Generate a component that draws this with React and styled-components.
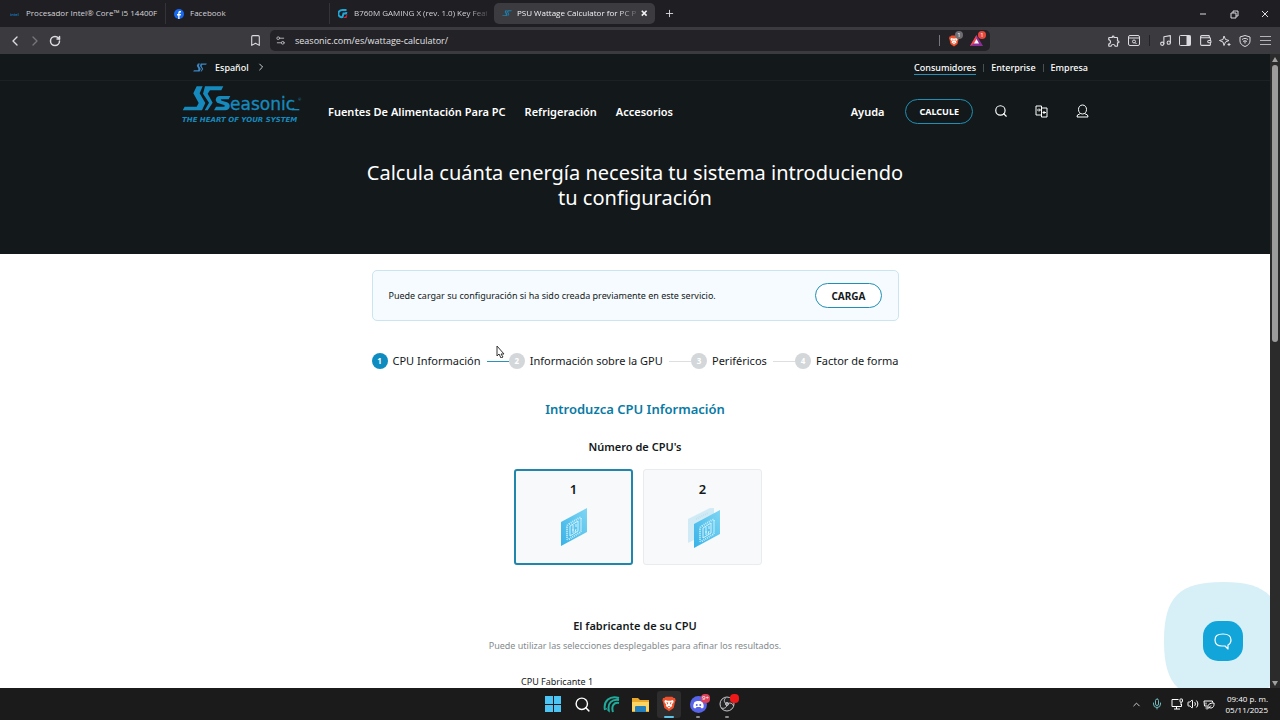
import React, { useState } from "react";
import styled, { createGlobalStyle, css } from "styled-components";
import {
  Bookmark,
  ChevronLeft,
  ChevronRight,
  ChevronUp,
  Mic,
  Music,
  RotateCw,
  Search,
  Settings2,
  Volume2,
  Wallet
} from "lucide-react";
import { MdOutlineExtension } from "react-icons/md";

const GlobalStyle = createGlobalStyle`
  * {
    box-sizing: border-box;
  }

  body {
    margin: 0;
    background: #fff;
    color: #14191b;
    font-family: "Noto Sans", sans-serif;
  }

  button {
    font-family: inherit;
    padding: 0;
    border: none;
    background: none;
    color: inherit;
  }

  a {
    color: inherit;
    text-decoration: none;
  }

  svg {
    display: block;
    flex: none;
  }
`;

const Screen = styled.div`
  display: flex;
  flex-direction: column;
  height: 100vh;
  overflow: hidden;
`;

/* browser chrome */

const TabBar = styled.div`
  flex: none;
  display: flex;
  align-items: center;
  height: 27px;
  padding-left: 2px;
  background: #1f1e23;
  color: #d4d4d8;
`;

const Tab = styled.button`
  flex: 0 1 164px;
  min-width: 0;
  height: 21px;
  display: flex;
  align-items: center;
  gap: 6px;
  padding: 0 6px 0 8px;
  font-family: "Open Sans", sans-serif;
  font-size: 8px;
  line-height: 12px;
  text-align: left;
  border-right: 1px solid ${props => (props.$divider ? "#34333a" : "transparent")};

  ${props =>
    props.$active &&
    css`
      flex-basis: 161px;
      padding-right: 5px;
      gap: 5px;
      background: #3c3b40;
      border-radius: 5px;
      color: #f2f2f4;
    `}
`;

const TabTitle = styled.span`
  flex: 1;
  min-width: 0;
  padding-bottom: 1px;
  white-space: nowrap;
  mask-image: ${props =>
    props.$fade ? "linear-gradient(to right, #000 85%, rgba(0, 0, 0, 0.2))" : "none"};
`;

const ChromeButton = styled.button`
  display: grid;
  place-items: center;
  width: 20px;
  height: 20px;
  color: ${props => (props.$dim ? "#77767c" : "#dcdce0")};
`;

const NewTab = styled(ChromeButton)`
  margin-left: 4px;
`;

const WindowButtons = styled.div`
  display: flex;
  gap: 11px;
  margin-left: auto;
  padding-right: 5px;
`;

const Toolbar = styled.div`
  flex: none;
  display: grid;
  grid-template-columns: 270px 1fr 290px;
  align-items: center;
  height: 27px;
  background: #3b3a3f;
`;

const ToolGroup = styled.div`
  display: flex;
  align-items: center;
  justify-content: ${props => (props.$end ? "flex-end" : "flex-start")};
  padding: 0 5px;
`;

const BookmarkButton = styled(ChromeButton)`
  margin-left: auto;
`;

const AddressBar = styled.div`
  display: flex;
  align-items: center;
  height: 21px;
  padding: 0 4px 0 5px;
  gap: 4px;
  border-radius: 5px;
  background: #232227;
`;

const AddressInput = styled.input`
  flex: 1;
  min-width: 0;
  padding: 0 0 0 5px;
  border: none;
  outline: none;
  background: none;
  color: #e2e2e5;
  font-family: "Open Sans", sans-serif;
  font-size: 9px;
`;

const ToolDivider = styled.span`
  width: 1px;
  height: 11px;
  margin: 0 ${props => (props.$light ? 0 : 5)}px;
  background: ${props => (props.$light ? "#77767c" : "#232227")};
`;

const Badge = styled.span`
  position: absolute;
  top: 0;
  right: 0;
  min-width: 8px;
  height: 8px;
  border-radius: 4px;
  background: ${props => props.$color};
  color: #fff;
  font-size: 6px;
  line-height: 8px;
  text-align: center;
`;

const Badged = styled.button`
  position: relative;
  display: grid;
  place-items: center;
  width: 19px;
  height: 19px;
`;

/* page */

const Viewport = styled.div`
  flex: 1;
  min-height: 0;
  display: flex;
`;

const Page = styled.main`
  position: relative;
  flex: 1;
  min-width: 0;
  overflow: hidden;
  background: #fff;
`;

const Scrollbar = styled.div`
  flex: none;
  width: 10px;
  display: flex;
  flex-direction: column;
  align-items: center;
  justify-content: space-between;
  padding: 3px 0 2px;
  background: #2b2b2c;
  color: #a0a0a0;
`;

const Thumb = styled.div`
  width: 6px;
  flex: 0 0 44%;
  margin: 3px 0 auto;
  border-radius: 3px;
  background: #9c9c9c;
`;

const Hero = styled.header`
  height: 200px;
  background: #13181a;
  color: #fff;
`;

const TopBar = styled.div`
  height: 27px;
  border-bottom: 1px solid #1c2224;
`;

const Container = styled.div`
  display: flex;
  align-items: center;
  height: 100%;
  max-width: 906px;
  margin: 0 auto;
`;

const Language = styled.button`
  display: flex;
  align-items: center;
  gap: 8px;
  padding-left: 11px;
  font-size: 9px;
  font-weight: 500;
`;

const Segments = styled.nav`
  display: flex;
  align-items: center;
  gap: 7px;
  margin-left: auto;
  padding-top: 2px;
  font-size: 9px;
  font-weight: 500;
  line-height: 12px;
`;

const Segment = styled.a`
  border-bottom: 1px solid ${props => (props.$active ? "#2b8fb3" : "transparent")};
`;

const SegmentDivider = styled.span`
  width: 1px;
  height: 8px;
  background: #4a5052;
`;

const NavRow = styled.div`
  height: 60px;
`;

const LogoLink = styled.a`
  align-self: flex-start;
  padding-top: 4px;
`;

const MainNav = styled.nav`
  display: flex;
  gap: 19px;
  margin-left: 26px;
  font-size: 11px;
  font-weight: 600;
`;

const Actions = styled.div`
  display: flex;
  align-items: center;
  margin-left: auto;
  font-size: 11px;
  font-weight: 600;
`;

const IconButton = styled.button`
  display: grid;
  place-items: center;
  width: 12px;
  height: 24px;
  margin-left: ${props => props.$gap || 29}px;
`;

const PillButton = styled.button`
  height: 25px;
  padding: 0 15px;
  border: 1px solid #1f8fb5;
  border-radius: 13px;
  background: #fff;
  font-size: 10px;
  font-weight: 700;
`;

const CalcButton = styled(PillButton)`
  margin-left: 21px;
  padding: 0 13px;
  background: transparent;
  font-size: 9px;
`;

const HeroTitle = styled.h1`
  max-width: 560px;
  margin: 19px auto 0;
  font-size: 20px;
  font-weight: 400;
  line-height: 25px;
  text-align: center;
`;

const Form = styled.form`
  max-width: 527px;
  margin: 0 auto;
  padding-top: 16px;
`;

const Banner = styled.section`
  display: flex;
  align-items: center;
  justify-content: space-between;
  height: 51px;
  padding: 0 16px;
  border: 1px solid #c9e6ef;
  border-radius: 5px;
  background: #f5fbfe;
  font-size: 9px;
`;

const Steps = styled.ol`
  display: flex;
  align-items: center;
  gap: 6px;
  margin: 31px 0 0;
  padding: 0;
  list-style: none;
`;

const Step = styled.li`
  flex: none;
  display: flex;
  align-items: center;
  gap: 5px;
  font-size: 11px;
  line-height: 18px;
`;

const StepNumber = styled.span`
  width: 16px;
  height: 16px;
  border-radius: 50%;
  background: ${props => (props.$active ? "#0e8cc0" : "#d3d7da")};
  color: #fff;
  font-size: 8px;
  font-weight: 700;
  line-height: 16px;
  text-align: center;
`;

const StepLine = styled.li`
  flex: 1;
  height: 1px;
  margin-right: -6px;
  background: ${props => (props.$active ? "#2b93b8" : "#dcdfe1")};
`;

const SectionTitle = styled.h2`
  margin: 29px 0 0;
  color: #087aa5;
  font-size: 13px;
  font-weight: 600;
  line-height: 20px;
  text-align: center;
`;

const CpuCount = styled.fieldset`
  margin: 20px 0 0;
  padding: 0;
  border: none;
`;

const GroupTitle = styled.legend`
  width: 100%;
  padding: 0;
  font-size: 11px;
  font-weight: 600;
  line-height: 16px;
  text-align: center;
`;

const Tiles = styled.div`
  display: flex;
  justify-content: center;
  gap: 10px;
  padding: 14px 0 0 6px;
`;

const Tile = styled.label`
  width: 119px;
  height: 96px;
  display: flex;
  flex-direction: column;
  align-items: center;
  gap: 9px;
  padding-top: ${props => (props.$checked ? 8 : 9)}px;
  border: ${props => (props.$checked ? "2px solid #2186ab" : "1px solid #e9ecee")};
  border-radius: 3px;
  background: #f7f9fb;
  font-size: 13px;
  font-weight: 600;
  line-height: 20px;
`;

const HiddenRadio = styled.input`
  appearance: none;
  position: absolute;
  margin: 0;
  opacity: 0;
`;

const MakerTitle = styled.h3`
  margin: 53px 0 0;
  font-size: 11px;
  font-weight: 600;
  line-height: 16px;
  text-align: center;
`;

const Hint = styled.p`
  margin: 5px 0 0;
  color: #858b8e;
  font-size: 9px;
  line-height: 14px;
  text-align: center;
`;

const Field = styled.div`
  display: flex;
  flex-direction: column;
  gap: 6px;
  width: 228px;
  margin: 22px auto 0;
  font-size: 9px;
  line-height: 14px;
`;

const MakerSelect = styled.select`
  height: 30px;
  border: 1px solid #d3d7da;
  border-radius: 3px;
  background: #fff;
`;

const Chat = styled.div`
  position: absolute;
  right: -12px;
  bottom: -12px;
  display: grid;
  place-items: center;

  > * {
    grid-area: 1 / 1;
  }
`;

const ChatButton = styled.button`
  display: grid;
  place-items: center;
  width: 40px;
  height: 40px;
  border-radius: 15px;
  background: #12a5da;
  color: #fff;
`;

const Pointer = styled.svg`
  position: absolute;
  left: 496px;
  top: 291px;
`;

/* taskbar */

const Taskbar = styled.footer`
  flex: none;
  display: grid;
  grid-template-columns: 1fr auto 1fr;
  align-items: center;
  height: 32px;
  background: #1b1b1c;
  color: #fff;
`;

const Apps = styled.div`
  grid-column: 2;
  display: flex;
  gap: 5px;
`;

const AppButton = styled.button`
  position: relative;
  display: grid;
  place-items: center;
  width: 24px;
  height: 27px;
  border-radius: 3px;
  background: ${props => (props.$active ? "#2d2d2e" : "none")};

  &::after {
    content: "";
    position: absolute;
    bottom: 0;
    width: ${props => (props.$active ? 10 : 4)}px;
    height: 2px;
    border-radius: 1px;
    background: ${props =>
      props.$active ? "#5fc3e8" : props.$running ? "#8c8c8e" : "transparent"};
  }

  ${Badge} {
    top: 3px;
    min-width: 9px;
    height: 9px;
  }
`;

const Tray = styled.div`
  display: flex;
  align-items: center;
  justify-content: flex-end;
  padding-right: 12px;
  gap: 4px;
`;

const Clock = styled.time`
  margin-left: 7px;
  font-family: "Open Sans", sans-serif;
  font-size: 8px;
  line-height: 11px;
  text-align: right;
`;

/* drawings */

const SeasonicMark = ({ width = 14, color = "#3d86c6" }) => (
  <svg width={width} height={(width * 9) / 14} viewBox="36 108 126 76" fill={color}>
    <path d="M80 110h18l-9 21 17 29-10 22H38l6-11h36l6-11-16-29z" />
    <path d="M105 110h55l-6 12h-34l-7 10 15 27-15 23h-9l13-23-18-27z" />
  </svg>
);

const Logo = () => (
  <svg width="120" height="39" viewBox="36 106 360 117" fill="#1689bd">
    <path d="M80 110h18l-9 21 17 29-10 22H38l6-11h36l6-11-16-29z" />
    <path d="M105 110h55l-6 12h-34l-7 10 15 27-15 23h-9l13-23-18-27z" />
    <path d="M181 139h-32c-14 0-16 18-3 22l16 5c4 1 3 5-1 5h-23l-6 11h34c15 0 18-19 5-24l-16-5c-4-2-3-4 1-4h20z" />
    <path d="M366 178h22v4h-22z" />
    <text x="180" y="181" fontFamily="DejaVu Sans" fontSize="51" stroke="#1689bd" strokeWidth="1">
      easonic
    </text>
    <text x="384" y="154" fontFamily="Lato" fontSize="12">
      ®
    </text>
    <text
      x="36"
      y="216"
      fontFamily="DejaVu Sans"
      fontSize="21"
      fontWeight="700"
      fontStyle="italic"
    >
      THE HEART OF YOUR SYSTEM
    </text>
  </svg>
);

const ChipFace = () => (
  <g>
    <path d="M0 14L26 0v24L0 38z" fill="url(#chip)" />
    <path
      d="M8 16l10-6q2-1 2 1v11q0 2-2 3l-10 6q-2 1-2-1V19q0-2 2-3z"
      fill="none"
      stroke="#c9effc"
      strokeWidth="2"
      strokeDasharray="1 1"
    />
    <path
      d="M9 18l8-5v10l-8 5zM12 17v8M15 16v3M11 22h2M15 21l-1 3"
      fill="none"
      stroke="#d6f4fd"
      strokeWidth="1"
    />
  </g>
);

const CpuIcon = ({ count }) => (
  <svg width="34" height="42" viewBox="0 0 34 42">
    <defs>
      <linearGradient id="chip" x1="1" y1="0" x2="0" y2="1">
        <stop offset="0" stopColor="#7fd6f3" />
        <stop offset="1" stopColor="#38b2e8" />
      </linearGradient>
    </defs>
    {count === 2 && (
      <g opacity="0.25">
        <path d="M2 11L28 -2v24L2 35z" fill="#62c5ea" />
        <path d="M10 11l12-6" stroke="#2a97c4" strokeWidth="2" strokeDasharray="1 1" />
      </g>
    )}
    <g transform={count === 2 ? "translate(8 2)" : "translate(4 0)"}>
      <ChipFace />
    </g>
  </svg>
);

const FacebookIcon = () => (
  <svg width="10" height="10" viewBox="0 0 20 20">
    <circle cx="10" cy="10" r="10" fill="#1769f0" />
    <path d="M8.500 20v-7H6v-3h2.500V8c0-3 1.500-4 3.500-4h2v3h-1.500c-1 0-1.500.5-1.500 1.500V10H14l-.5 3H11v7z" fill="#fff" />
  </svg>
);

const GigabyteIcon = () => (
  <svg width="10" height="10" viewBox="0 0 20 20">
    <path d="M17 2H9C3 2 0 6 1 11c1 4 4 6 8 5l2-7h5l1-3" fill="none" stroke="#1fa6d6" strokeWidth="4" />
    <path d="M19 10l-2 8h-7l5-3z" fill="#e0203a" />
  </svg>
);

const IntelIcon = () => (
  <svg width="10" height="10" viewBox="0 0 20 20">
    <text x="0" y="13" fontFamily="Lato" fontSize="9" fontWeight="700" fill="#1477b8">
      intel
    </text>
  </svg>
);

const BraveIcon = ({ size = 12 }) => (
  <svg width={size} height={size} viewBox="0 0 24 24">
    <path d="M7 1h10l2 2 2 0 1 4-1 2-2 9-7 5-7-5L3 9 2 7l1-4h2z" fill="#f0512b" />
    <path d="M6 6l4 1h4l4-1 1 3-3 4 1 2-3 2-2 2-2-2-3-2 1-2-3-4z" fill="#fff" />
    <path d="M8 9l3 1-1 3zM16 9l-3 1 1 3zM10 15h4l-2 2z" fill="#f0512b" />
  </svg>
);

const RewardsIcon = () => (
  <svg width="13" height="11" viewBox="0 0 26 22">
    <path d="M13 0l13 22H0z" fill="#8b2f97" />
    <path d="M13 0L0 22l13-8z" fill="#f0484b" />
    <path d="M13 8l5 9H8z" fill="#fff" />
  </svg>
);

const TabSearchIcon = () => (
  <svg width="12" height="11" viewBox="0 0 24 22" fill="none" stroke="currentColor" strokeWidth="2">
    <rect x="1" y="1" width="22" height="20" rx="3" />
    <path d="M2 6h20" />
    <circle cx="12" cy="13" r="3" />
    <path d="M14 15l3 3" />
  </svg>
);

const SidebarIcon = () => (
  <svg width="12" height="11" viewBox="0 0 24 22">
    <rect x="1" y="1" width="22" height="20" rx="2" fill="none" stroke="currentColor" strokeWidth="2" />
    <path d="M15 1h8v20h-8z" fill="currentColor" />
  </svg>
);

const LeoIcon = () => (
  <svg width="12" height="12" viewBox="0 0 24 24" fill="none" stroke="currentColor" strokeWidth="2">
    <path d="M10 2l3 7 7 2-7 3-3 7-2-7-7-3 7-2z" strokeLinejoin="round" />
    <path d="M20 16v6M17 19h6" />
  </svg>
);

const VpnIcon = () => (
  <svg width="12" height="12" viewBox="0 0 24 24" fill="none" stroke="currentColor" strokeWidth="2">
    <path d="M12 1l10 3v8c0 5-4 9-10 11C6 21 2 17 2 12V4z" />
    <path d="M6 9c4-3 8-3 12 0M8 13c3-2 5-2 8 0M12 12v5" />
  </svg>
);

const MenuIcon = () => (
  <svg width="12" height="12" viewBox="0 0 12 12" fill="#b4b3b8">
    <path d="M1 1h11v1H1zM1 5h11v1H1zM1 9h11v1H1z" />
  </svg>
);

const StrokeIcon = ({ d, size = 10, width = 1 }) => (
  <svg width={size} height={size} viewBox="0 0 10 10" fill="none" stroke="currentColor" strokeWidth={width}>
    <path d={d} />
  </svg>
);

const CompareIcon = () => (
  <svg width="13" height="13" viewBox="0 0 26 26" fill="none" stroke="currentColor" strokeWidth="2">
    <path d="M13 20H2V2h11v22h11V6H13" />
    <path d="M4 10h6M8 7l3 3-3 3M22 15h-6M19 12l-3 3 3 3" />
  </svg>
);

const UserIcon = () => (
  <svg width="13" height="14" viewBox="0 0 26 28" fill="none" stroke="currentColor" strokeWidth="2">
    <path d="M13 2c5 0 8 4 8 9s-3 9-8 9-8-4-8-9 3-9 8-9z" />
    <path d="M9 19l-6 3-1 4h22l-1-4-6-3" />
  </svg>
);

const ChatHalo = () => (
  <svg width="118" height="118" viewBox="0 0 118 118" fill="#d7eff6">
    <path d="M59 0C103 0 118 15 118 59S103 118 59 118 0 103 0 59 15 0 59 0z" />
  </svg>
);

const ChatIcon = () => (
  <svg width="18" height="18" viewBox="0 0 18 18" fill="none" stroke="currentColor" strokeWidth="1.200">
    <path
      d="M14 17l-3-3H8c-5 0-7-2-7-6s2-6 8-6 8 2 8 6c0 2-1 4-3 5z"
      strokeLinejoin="round"
    />
  </svg>
);

const WindowsIcon = () => (
  <svg width="16" height="16" viewBox="0 0 16 16" fill="#4cc5f5">
    <path d="M0 0h8v8H0zM9 0h7v8H9zM0 9h8v7H0zM9 9h7v7H9z" />
  </svg>
);

const SwirlIcon = () => (
  <svg width="17" height="17" viewBox="0 0 17 17" fill="none" stroke="#1fab9b" strokeWidth="2">
    <path d="M16 2C7-1 0 5 2 14M16 4C9 3 4 7 6 15M16 7c-5-1-8 3-6 9" />
    <path d="M3 12c1 2 2 3 4 4" strokeWidth="1" />
  </svg>
);

const FolderIcon = () => (
  <svg width="17" height="15" viewBox="0 0 17 15">
    <path d="M0 1h6l2 2h9v12H0z" fill="#e8a92c" />
    <path d="M0 5h17v9H0z" fill="#fcd462" />
    <path d="M3 10q0-1 1-1h9q1 0 1 1v5H3z" fill="#2480bd" />
  </svg>
);

const DiscordIcon = () => (
  <svg width="17" height="17" viewBox="0 0 34 34">
    <circle cx="17" cy="17" r="17" fill="#5764e8" />
    <path d="M9 12c3-3 13-3 16 0 2 4 3 7 2 11-2 2-4 2-5 1l-1-2h-8l-1 2c-1 1-3 1-5-1-1-4 0-7 2-11z" fill="#fff" />
    <circle cx="13.500" cy="18" r="2" fill="#5764e8" />
    <circle cx="20.500" cy="18" r="2" fill="#5764e8" />
  </svg>
);

const ObsIcon = () => (
  <svg width="16" height="16" viewBox="0 0 32 32" fill="none" stroke="#c9c9cb" strokeWidth="2">
    <circle cx="16" cy="16" r="14" fill="#242426" />
    <path d="M16 16c-6-2-7-8-3-12M16 16c6-4 12-1 13 4M16 16c0 7-5 10-11 8" />
    <circle cx="16" cy="16" r="3" />
  </svg>
);

const NetworkIcon = () => (
  <svg width="12" height="12" viewBox="0 0 24 24" fill="none" stroke="currentColor" strokeWidth="2">
    <path d="M15 3H2v14h19v-5M6 22h12M11 17v5" />
    <rect x="18" y="2" width="5" height="6" rx="1" />
    <path d="M20 8v6" />
  </svg>
);

const LeafIcon = () => (
  <svg width="12" height="11" viewBox="0 0 24 22" fill="none" stroke="currentColor" strokeWidth="2">
    <path d="M9 14H3L2 4h17v3M5 18h4" />
    <path d="M10 18c-1-7 3-10 12-10 1 8-4 12-10 9M8 21l8-8M6 7v4" />
  </svg>
);

const tabs = [
  { title: "Procesador Intel® Core™ i5 14400F", icon: <IntelIcon />, divider: true },
  { title: "Facebook", icon: <FacebookIcon />, divider: true },
  { title: "B760M GAMING X (rev. 1.0) Key Feat", icon: <GigabyteIcon />, fade: true },
  {
    title: "PSU Wattage Calculator for PC P",
    icon: <SeasonicMark width={10} color="#1b7fae" />,
    active: true,
    fade: true
  }
];

const steps = ["CPU Información", "Información sobre la GPU", "Periféricos", "Factor de forma"];

const Browser = () => (
  <>
    <TabBar>
      {tabs.map(tab => (
        <Tab key={tab.title} $active={tab.active} $divider={tab.divider}>
          {tab.icon}
          <TabTitle $fade={tab.fade}>{tab.title}</TabTitle>
          {tab.active && <StrokeIcon d="M1 1l6 6M7 1l-6 6" size={8} width={2} />}
        </Tab>
      ))}
      <NewTab aria-label="Nueva pestaña">
        <StrokeIcon d="M5 1v8M1 5h8" size={9} />
      </NewTab>
      <WindowButtons>
        <ChromeButton aria-label="Minimizar">
          <StrokeIcon d="M2 5h6" />
        </ChromeButton>
        <ChromeButton aria-label="Restaurar">
          <StrokeIcon d="M2 4h5v5H2zM4 4V2h5v5H7" />
        </ChromeButton>
        <ChromeButton aria-label="Cerrar">
          <StrokeIcon d="M2 2l6 6M8 2l-6 6" />
        </ChromeButton>
      </WindowButtons>
    </TabBar>
    <Toolbar>
      <ToolGroup>
        <ChromeButton aria-label="Atrás">
          <ChevronLeft size={16} />
        </ChromeButton>
        <ChromeButton aria-label="Adelante" $dim>
          <ChevronRight size={16} />
        </ChromeButton>
        <ChromeButton aria-label="Recargar">
          <RotateCw size={12} strokeWidth={3} />
        </ChromeButton>
        <BookmarkButton aria-label="Marcador">
          <Bookmark size={13} />
        </BookmarkButton>
      </ToolGroup>
      <AddressBar>
        <Settings2 size={11} color="#b9b9bd" />
        <AddressInput aria-label="Dirección" defaultValue="seasonic.com/es/wattage-calculator/" />
        <ToolDivider $light />
        <Badged aria-label="Brave Shields">
          <BraveIcon size={12} />
          <Badge $color="#6c6c72">1</Badge>
        </Badged>
        <Badged aria-label="Brave Rewards">
          <RewardsIcon />
          <Badge $color="#e8453c">1</Badge>
        </Badged>
      </AddressBar>
      <ToolGroup $end>
        <ChromeButton aria-label="Extensiones">
          <MdOutlineExtension size={14} />
        </ChromeButton>
        <ChromeButton aria-label="Buscar pestañas">
          <TabSearchIcon />
        </ChromeButton>
        <ToolDivider />
        <ChromeButton aria-label="Multimedia">
          <Music size={13} />
        </ChromeButton>
        <ChromeButton aria-label="Panel lateral">
          <SidebarIcon />
        </ChromeButton>
        <ChromeButton aria-label="Billetera">
          <Wallet size={13} />
        </ChromeButton>
        <ChromeButton aria-label="Leo">
          <LeoIcon />
        </ChromeButton>
        <ChromeButton aria-label="VPN">
          <VpnIcon />
        </ChromeButton>
        <ChromeButton aria-label="Menú">
          <MenuIcon />
        </ChromeButton>
      </ToolGroup>
    </Toolbar>
  </>
);

const SiteHeader = () => (
  <Hero>
    <TopBar>
      <Container>
        <Language>
          <SeasonicMark />
          Español
          <StrokeIcon d="M3 1l4 4-4 4" size={8} />
        </Language>
        <Segments>
          <Segment href="#consumidores" $active>
            Consumidores
          </Segment>
          <SegmentDivider />
          <Segment href="#enterprise">Enterprise</Segment>
          <SegmentDivider />
          <Segment href="#empresa">Empresa</Segment>
        </Segments>
      </Container>
    </TopBar>
    <NavRow>
      <Container>
        <LogoLink href="#inicio" aria-label="Seasonic">
          <Logo />
        </LogoLink>
        <MainNav>
          <a href="#fuentes">Fuentes De Alimentación Para PC</a>
          <a href="#refrigeracion">Refrigeración</a>
          <a href="#accesorios">Accesorios</a>
        </MainNav>
        <Actions>
          <a href="#ayuda">Ayuda</a>
          <CalcButton>CALCULE</CalcButton>
          <IconButton aria-label="Buscar" $gap={21}>
            <Search size={14} />
          </IconButton>
          <IconButton aria-label="Comparar">
            <CompareIcon />
          </IconButton>
          <IconButton aria-label="Cuenta">
            <UserIcon />
          </IconButton>
        </Actions>
      </Container>
    </NavRow>
    <HeroTitle>Calcula cuánta energía necesita tu sistema introduciendo tu configuración</HeroTitle>
  </Hero>
);

const Calculator = () => {
  const [cpus, setCpus] = useState(1);
  return (
    <Form>
      <Banner>
        Puede cargar su configuración si ha sido creada previamente en este servicio.
        <PillButton type="button">CARGA</PillButton>
      </Banner>
      <Steps>
        {steps.map((step, i) => (
          <React.Fragment key={step}>
            {i > 0 && <StepLine $active={i === 1} aria-hidden="true" />}
            <Step>
              <StepNumber $active={i === 0}>{i + 1}</StepNumber>
              {step}
            </Step>
          </React.Fragment>
        ))}
      </Steps>
      <SectionTitle>Introduzca CPU Información</SectionTitle>
      <CpuCount>
        <GroupTitle>Número de CPU's</GroupTitle>
        <Tiles>
          {[1, 2].map(n => (
            <Tile key={n} $checked={cpus === n}>
              <HiddenRadio type="radio" name="cpus" checked={cpus === n} onChange={() => setCpus(n)} />
              {n}
              <CpuIcon count={n} />
            </Tile>
          ))}
        </Tiles>
      </CpuCount>
      <MakerTitle>El fabricante de su CPU</MakerTitle>
      <Hint>Puede utilizar las selecciones desplegables para afinar los resultados.</Hint>
      <Field>
        <label htmlFor="maker">CPU Fabricante 1</label>
        <MakerSelect id="maker" />
      </Field>
    </Form>
  );
};

const WindowsTaskbar = () => (
  <Taskbar>
    <Apps>
      <AppButton aria-label="Inicio">
        <WindowsIcon />
      </AppButton>
      <AppButton aria-label="Buscar">
        <Search size={17} />
      </AppButton>
      <AppButton aria-label="Predator">
        <SwirlIcon />
      </AppButton>
      <AppButton aria-label="Explorador">
        <FolderIcon />
      </AppButton>
      <AppButton aria-label="Brave" $active>
        <BraveIcon size={16} />
      </AppButton>
      <AppButton aria-label="Discord" $running>
        <DiscordIcon />
        <Badge $color="#e0405a">9+</Badge>
      </AppButton>
      <AppButton aria-label="OBS" $running>
        <ObsIcon />
        <Badge $color="#f01818" />
      </AppButton>
    </Apps>
    <Tray>
      <ChromeButton aria-label="Iconos ocultos">
        <ChevronUp size={11} />
      </ChromeButton>
      <Mic size={12} color="#6fb9bd" />
      <span />
      <NetworkIcon />
      <Volume2 size={12} />
      <LeafIcon />
      <Clock>
        09:40 p. m.
        <br />
        05/11/2025
      </Clock>
    </Tray>
  </Taskbar>
);

const App = () => (
  <Screen>
    <GlobalStyle />
    <Browser />
    <Viewport>
      <Page>
        <SiteHeader />
        <Calculator />
        <Chat>
          <ChatHalo />
          <ChatButton aria-label="Chat">
            <ChatIcon />
          </ChatButton>
        </Chat>
        <Pointer width="9" height="13" viewBox="0 0 9 13">
          <path d="M1 1v10l2-2 2 4 2-1-2-3h3z" fill="#fff" stroke="#333" />
        </Pointer>
      </Page>
      <Scrollbar>
        <svg width="6" height="5" viewBox="0 0 6 5" fill="currentColor">
          <path d="M3 0l3 5H0z" />
        </svg>
        <Thumb />
        <svg width="6" height="5" viewBox="0 0 6 5" fill="currentColor">
          <path d="M0 0h6L3 5z" />
        </svg>
      </Scrollbar>
    </Viewport>
    <WindowsTaskbar />
  </Screen>
);

export default App;
